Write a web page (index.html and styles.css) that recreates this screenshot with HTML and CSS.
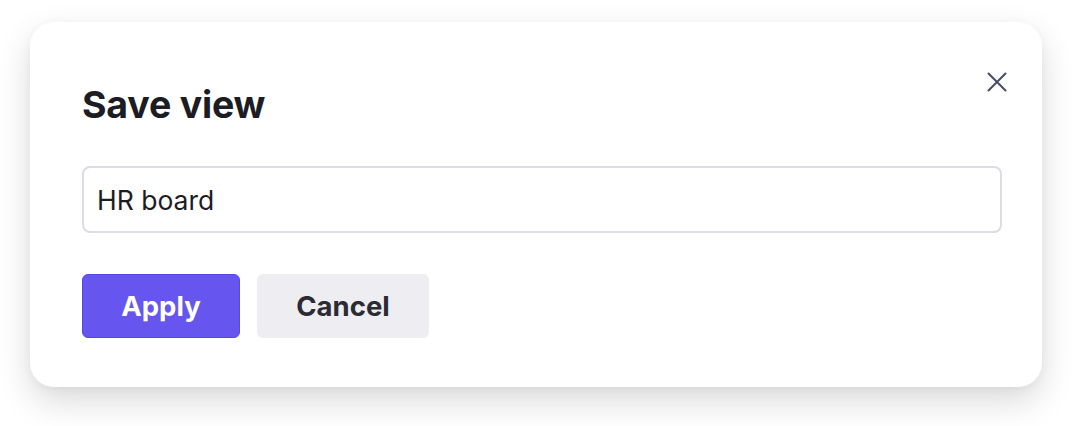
FILE: index.html
```html
<!DOCTYPE html>
<html lang="en">
<head>
<meta charset="utf-8">
<title>Save view</title>
<link rel="stylesheet" href="styles.css">
</head>
<body>
<div class="stage">
  <div class="dialog">
    <button class="close" aria-label="Close">
      <svg width="20" height="20" viewBox="0 0 20 20"><path d="M1.5 1.5 L18.5 18.5 M18.5 1.5 L1.5 18.5" stroke="#4b4b63" stroke-width="2" stroke-linecap="round" fill="none"/></svg>
    </button>
    <h1 class="title">Save view</h1>
    <div class="field">HR board</div>
    <div class="actions">
      <button class="btn btn-primary">Apply</button>
      <button class="btn btn-secondary">Cancel</button>
    </div>
  </div>
</div>
</body>
</html>
```
FILE: styles.css
```css
html, body {
  margin: 0;
  padding: 0;
  background: #ffffff;
  font-family: Inter, "Noto Sans", sans-serif;
}
.stage {
  padding: 22px 30px 0 30px;
  height: 426px;
  box-sizing: border-box;
}
.dialog {
  position: relative;
  width: 1012px;
  height: 365px;
  box-sizing: border-box;
  background: #ffffff;
  border-radius: 24px;
  box-shadow: 0 14px 34px rgba(0, 0, 0, 0.15), 0 2px 10px rgba(0, 0, 0, 0.04);
  padding: 58px 40px 0 52px;
}
.close {
  position: absolute;
  top: 50px;
  right: 35px;
  width: 20px;
  height: 20px;
  padding: 0;
  border: 0;
  background: none;
  display: flex;
}
.title {
  margin: 0;
  font-size: 37.5px;
  line-height: 50px;
  font-weight: 700;
  color: #1c1c24;
  letter-spacing: -0.2px;
}
.field {
  margin-top: 36px;
  height: 67px;
  box-sizing: border-box;
  border: 2px solid #dcdce3;
  border-radius: 8px;
  padding: 0 13px;
  display: flex;
  align-items: center;
  font-size: 26.5px;
  color: #1c1c24;
}
.actions {
  margin-top: 41px;
  display: flex;
  gap: 17px;
}
.btn {
  height: 64px;
  border-radius: 6px;
  font-family: inherit;
  font-size: 27.5px;
  font-weight: 700;
  padding: 0;
  box-sizing: border-box;
}
.btn-primary {
  width: 158px;
  background: #6655ee;
  border: 1.5px solid #5746e8;
  color: #ffffff;
}
.btn-secondary {
  width: 172px;
  background: #ededf2;
  border: 0;
  color: #2b2b33;
}
```
